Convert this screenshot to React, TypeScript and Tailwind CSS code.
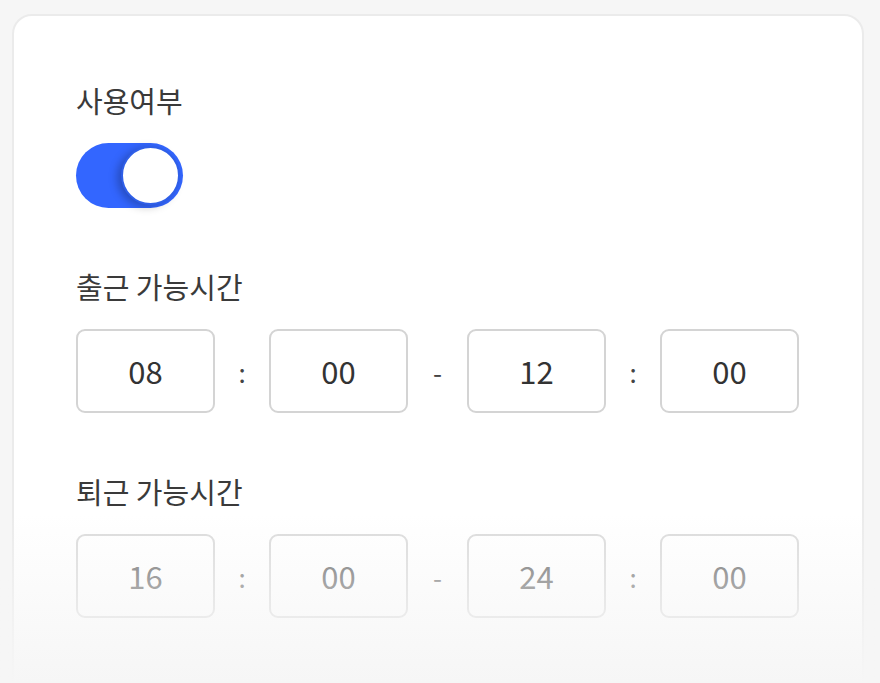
import React from "react";

const FONT = { fontFamily: '"Noto Sans CJK KR", "Noto Sans", sans-serif' };

function TimeBox({ value, muted }: { value: string; muted?: boolean }) {
  return (
    <div
      className={
        "flex h-[84px] w-[139px] items-center justify-center rounded-[9px] border-2 text-[31px] " +
        (muted ? "border-[#dadada] text-[#6a6a6a]" : "border-[#d4d4d4] text-[#333333]")
      }
    >
      {value}
    </div>
  );
}

function Sep({ ch, muted }: { ch: string; muted?: boolean }) {
  return (
    <div
      className={
        "flex items-center justify-center text-[26px] " +
        (ch === ":" ? "w-[54px] " : "w-[59px] ") +
        (muted ? "text-[#777777]" : "text-[#444444]")
      }
    >
      {ch}
    </div>
  );
}

function TimeRow({ values, muted }: { values: string[]; muted?: boolean }) {
  return (
    <div className="flex items-center">
      <TimeBox value={values[0]} muted={muted} />
      <Sep ch=":" muted={muted} />
      <TimeBox value={values[1]} muted={muted} />
      <Sep ch="-" muted={muted} />
      <TimeBox value={values[2]} muted={muted} />
      <Sep ch=":" muted={muted} />
      <TimeBox value={values[3]} muted={muted} />
    </div>
  );
}

export default function App() {
  return (
    <div className="relative h-[683px] w-[880px] overflow-hidden bg-[#f6f6f6] pt-[14px] pl-[12px]" style={FONT}>
      <div className="h-[720px] w-[852px] rounded-[20px] border-2 border-[#ebebeb] bg-white pl-[62px] pt-[66px]">
        <div className="text-[29px] leading-[36px] text-[#3a3a3a]">사용여부</div>

        {/* toggle */}
        <div className="mt-[25px] flex h-[65px] w-[107px] items-center justify-end rounded-full bg-[#3366ff] pr-[3px]">
          <div className="h-[59px] w-[59px] rounded-full border-2 border-[#2f5fe8] bg-white shadow-[-4px_2px_8px_rgba(0,0,0,0.25)]" />
        </div>

        <div className="mt-[60px] text-[29px] leading-[36px] text-[#3a3a3a]">출근 가능시간</div>
        <div className="mt-[25px]">
          <TimeRow values={["08", "00", "12", "00"]} />
        </div>

        <div className="mt-[60px] text-[29px] leading-[36px] text-[#3a3a3a]">퇴근 가능시간</div>
        <div className="mt-[25px]">
          <TimeRow values={["16", "00", "24", "00"]} muted />
        </div>
      </div>

      {/* bottom fade over the card */}
      <div className="pointer-events-none absolute bottom-0 left-0 h-[170px] w-full bg-gradient-to-b from-[rgba(246,246,246,0)] to-[#f6f6f6]" />
    </div>
  );
}
